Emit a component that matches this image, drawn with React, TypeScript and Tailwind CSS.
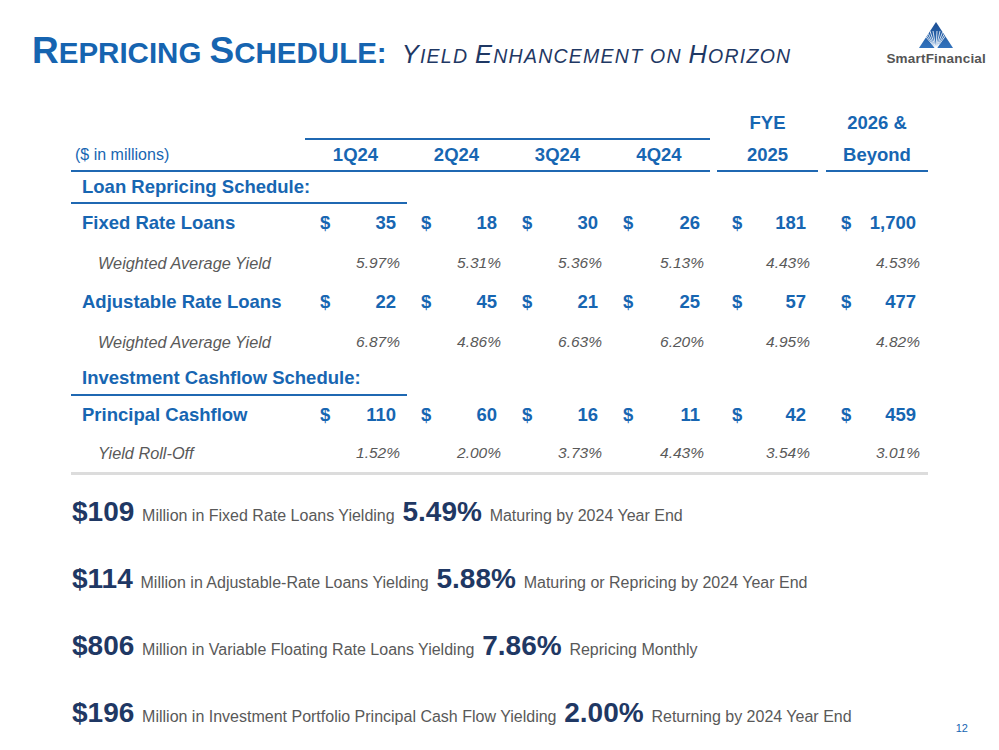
import React from 'react'

// Repricing schedule slide — title, quarterly table, four headline bullets.

const BLUE = 'text-[#1766b2]'

type Cell = { v: string; kind: 'amt' | 'pct' }

const amt = (v: string): Cell => ({ v, kind: 'amt' })
const pct = (v: string): Cell => ({ v, kind: 'pct' })

function Cols({ label, cells, h }: { label: React.ReactNode; cells: React.ReactNode[]; h: string }) {
  return (
    <div className={`flex items-center ${h}`}>
      <div className="w-[234px] shrink-0">{label}</div>
      <div className="w-[101px] shrink-0">{cells[0]}</div>
      <div className="w-[101px] shrink-0">{cells[1]}</div>
      <div className="w-[101px] shrink-0">{cells[2]}</div>
      <div className="w-[102px] shrink-0">{cells[3]}</div>
      <div className="w-[7px] shrink-0" />
      <div className="w-[101px] shrink-0">{cells[4]}</div>
      <div className="w-[8px] shrink-0" />
      <div className="w-[102px] shrink-0">{cells[5]}</div>
    </div>
  )
}

function Value({ c, i }: { c: Cell; i: number }) {
  const wide = i >= 4
  if (c.kind === 'amt') {
    return (
      <div className={`flex justify-between pl-[15px] text-[18.5px] font-bold ${BLUE} ${wide ? 'pr-[12px]' : 'pr-[10px]'}`}>
        <span>$</span>
        <span>{c.v}</span>
      </div>
    )
  }
  return (
    <div className={`text-right text-[15.5px] italic text-[#595959] ${wide ? 'pr-[8px]' : 'pr-[6px]'}`}>{c.v}</div>
  )
}

function DataRow({ label, values, sub, h }: { label: string; values: Cell[]; sub?: boolean; h: string }) {
  return (
    <Cols
      h={h}
      label={
        sub ? (
          <span className="pl-[27px] text-[16.3px] italic text-[#595959]">{label}</span>
        ) : (
          <span className={`pl-[11px] text-[18.5px] font-bold ${BLUE}`}>{label}</span>
        )
      }
      cells={values.map((c, i) => <Value key={i} c={c} i={i} />)}
    />
  )
}

function Head({ t }: { t: string }) {
  return <div className={`text-center text-[18.5px] font-bold ${BLUE}`}>{t}</div>
}

function Logo() {
  const rays = [2, 5, 8, 11, 14, 18, 21, 24, 27, 30]
  return (
    <div className="flex flex-col items-center pt-[22px]">
      <svg width="34" height="27" viewBox="0 0 34 27">
        <defs>
          <linearGradient id="tri" x1="0" y1="0" x2="0" y2="1">
            <stop offset="0" stopColor="#1b4e93" />
            <stop offset="1" stopColor="#3273bd" />
          </linearGradient>
          <clipPath id="triClip">
            <polygon points="17,0 34,26 0,26" />
          </clipPath>
        </defs>
        <polygon points="17,0 34,26 0,26" fill="url(#tri)" />
        <g clipPath="url(#triClip)" stroke="#ffffff" strokeWidth="0.8">
          {rays.map((x) => (
            <line key={x} x1="17" y1="27" x2={x} y2="9" />
          ))}
        </g>
      </svg>
      <div className="mt-[3px] text-[13.5px] font-bold leading-none tracking-[0.2px] text-[#555555]">SmartFinancial</div>
    </div>
  )
}

const bullets = [
  { a: '$109', t1: 'Million in Fixed Rate Loans Yielding', b: '5.49%', t2: 'Maturing by 2024 Year End' },
  { a: '$114', t1: 'Million in Adjustable-Rate Loans Yielding', b: '5.88%', t2: 'Maturing or Repricing by 2024 Year End' },
  { a: '$806', t1: 'Million in Variable Floating Rate Loans Yielding', b: '7.86%', t2: 'Repricing Monthly' },
  { a: '$196', t1: 'Million in Investment Portfolio Principal Cash Flow Yielding', b: '2.00%', t2: 'Returning by 2024 Year End' },
]

export default function App() {
  return (
    <div className="h-[750px] w-[999px] overflow-hidden bg-white font-['Liberation_Sans',Arial,sans-serif] leading-none">
      {/* header */}
      <div className="flex h-[108px] justify-between pl-[32px] pr-[13px]">
        <h1 className="pt-[32px] leading-none">
          <span className="font-bold text-[#1664b0]">
            <span className="text-[37px]">R</span>
            <span className="text-[29.5px]">EPRICING </span>
            <span className="text-[37px]">S</span>
            <span className="text-[29.5px]">CHEDULE:</span>
          </span>
          <span className="ml-[15px] font-normal italic tracking-[1.25px] text-[#1f3864]">
            <span className="text-[25.5px]">Y</span>
            <span className="text-[19.5px]">IELD </span>
            <span className="text-[25.5px]">E</span>
            <span className="text-[19.5px]">NHANCEMENT ON </span>
            <span className="text-[25.5px]">H</span>
            <span className="text-[19.5px]">ORIZON</span>
          </span>
        </h1>
        <Logo />
      </div>

      {/* table */}
      <div className="pl-[71px]">
        <Cols h="h-[30px]" label={null} cells={['', '', '', '', <Head key="a" t="FYE" />, <Head key="b" t="2026 &" />]} />
        <div className="flex h-[2px]">
          <div className="w-[234px]" />
          <div className="w-[405px] bg-[#1f68b2]" />
        </div>
        <Cols
          h="h-[30px]"
          label={<span className={`pl-[4px] text-[16px] ${BLUE}`}>($ in millions)</span>}
          cells={['1Q24', '2Q24', '3Q24', '4Q24', '2025', 'Beyond'].map((t) => <Head key={t} t={t} />)}
        />
        <div className="flex h-[2px]">
          <div className="w-[639px] bg-[#1f68b2]" />
          <div className="w-[7px]" />
          <div className="w-[101px] bg-[#1f68b2]" />
          <div className="w-[8px]" />
          <div className="w-[102px] bg-[#1f68b2]" />
        </div>
        <div className="flex h-[30px] items-center">
          <span className={`pl-[11px] text-[18.5px] font-bold ${BLUE}`}>Loan Repricing Schedule:</span>
        </div>
        <div className="h-[2px] w-[336px] bg-[#1f68b2]" />
        <DataRow h="h-[39px]" label="Fixed Rate Loans" values={['35', '18', '30', '26', '181', '1,700'].map(amt)} />
        <DataRow h="h-[40px]" sub label="Weighted Average Yield" values={['5.97%', '5.31%', '5.36%', '5.13%', '4.43%', '4.53%'].map(pct)} />
        <DataRow h="h-[39px]" label="Adjustable Rate Loans" values={['22', '45', '21', '25', '57', '477'].map(amt)} />
        <DataRow h="h-[40px]" sub label="Weighted Average Yield" values={['6.87%', '4.86%', '6.63%', '6.20%', '4.95%', '4.82%'].map(pct)} />
        <div className="flex h-[32px] items-center">
          <span className={`pl-[11px] text-[18.5px] font-bold ${BLUE}`}>Investment Cashflow Schedule:</span>
        </div>
        <div className="h-[2px] w-[336px] bg-[#1f68b2]" />
        <DataRow h="h-[38px]" label="Principal Cashflow" values={['110', '60', '16', '11', '42', '459'].map(amt)} />
        <DataRow h="h-[38px]" sub label="Yield Roll-Off" values={['1.52%', '2.00%', '3.73%', '4.43%', '3.54%', '3.01%'].map(pct)} />
        <div className="h-[3px] w-[857px] bg-[#dcdcdc]" />
      </div>

      {/* headline bullets */}
      <div className="pt-[3px]">
        {bullets.map((b, i) => (
          <div key={b.a} className="flex h-[67px] items-center justify-between pl-[72px] pr-[31px]">
            <p className="text-[28px] leading-none">
              <span className="font-bold text-[#1f3864]">{b.a}</span>{' '}
              <span className="text-[16px] text-[#595959]">{b.t1}</span>{' '}
              <span className="font-bold text-[#1f3864]">{b.b}</span>{' '}
              <span className="text-[16px] text-[#595959]">{b.t2}</span>
            </p>
            {i === 3 && <span className="self-end pb-[12px] text-[11px] text-[#1766b2]">12</span>}
          </div>
        ))}
      </div>
    </div>
  )
}
